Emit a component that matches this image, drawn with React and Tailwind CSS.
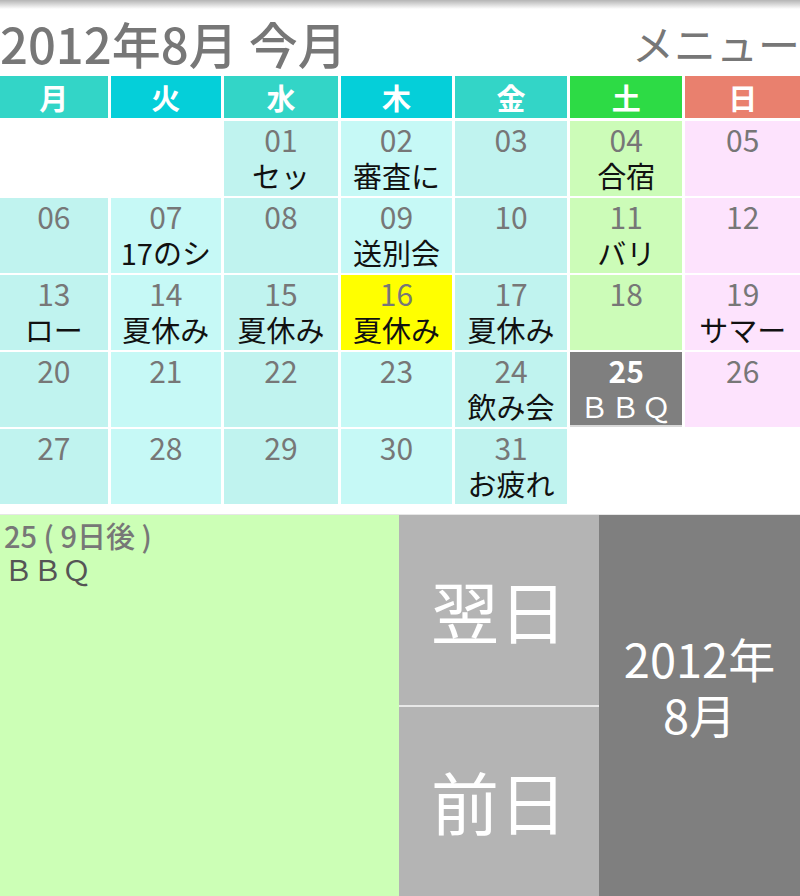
const headers = [
  { label: "月", bg: "bg-[#33d5c7]" },
  { label: "火", bg: "bg-[#05cfd9]" },
  { label: "水", bg: "bg-[#33d5c7]" },
  { label: "木", bg: "bg-[#05cfd9]" },
  { label: "金", bg: "bg-[#33d5c7]" },
  { label: "土", bg: "bg-[#2ddb45]" },
  { label: "日", bg: "bg-[#e9806e]" },
];

const cellBg = [
  "bg-[#c0f3ef]",
  "bg-[#c6f9f6]",
  "bg-[#c0f3ef]",
  "bg-[#c6f9f6]",
  "bg-[#c0f3ef]",
  "bg-[#ccfcb8]",
  "bg-[#fde3fd]",
];

// null = empty slot outside the month
const weeks = [
  [null, null, { d: "01", ev: "セッ" }, { d: "02", ev: "審査に" }, { d: "03" }, { d: "04", ev: "合宿" }, { d: "05" }],
  [{ d: "06" }, { d: "07", ev: "17のシ" }, { d: "08" }, { d: "09", ev: "送別会" }, { d: "10" }, { d: "11", ev: "バリ" }, { d: "12" }],
  [{ d: "13", ev: "ロー" }, { d: "14", ev: "夏休み" }, { d: "15", ev: "夏休み" }, { d: "16", ev: "夏休み", today: true }, { d: "17", ev: "夏休み" }, { d: "18" }, { d: "19", ev: "サマー" }],
  [{ d: "20" }, { d: "21" }, { d: "22" }, { d: "23" }, { d: "24", ev: "飲み会" }, { d: "25", ev: "ＢＢＱ", selected: true }, { d: "26" }],
  [{ d: "27" }, { d: "28" }, { d: "29" }, { d: "30" }, { d: "31", ev: "お疲れ" }, null, null],
];

function DayCell({ cell, col }) {
  if (!cell) return <div className="h-[75px] bg-white" />;

  if (cell.selected) {
    return (
      <div className="h-[75px] bg-[#7f7f7f] border-b-2 border-[#d9d9d9] flex flex-col items-center">
        <span className="text-[30px] leading-[36px] font-bold text-white">{cell.d}</span>
        <span className="text-[29px] leading-[34px] text-white tracking-[2px]">{cell.ev}</span>
      </div>
    );
  }

  const bg = cell.today ? "bg-[#ffff00]" : cellBg[col];
  return (
    <div className={`h-[75px] ${bg} flex flex-col items-center`}>
      <span className="text-[30px] leading-[36px] text-[#777777]">{cell.d}</span>
      {cell.ev && <span className="text-[29px] leading-[36px] text-[#111111] whitespace-nowrap">{cell.ev}</span>}
    </div>
  );
}

export default function App() {
  return (
    <div className="w-[800px] h-[896px] bg-white overflow-hidden font-['Noto_Sans_CJK_JP','Noto_Sans',sans-serif] flex flex-col">
      <div className="h-[9px] bg-gradient-to-b from-[#b5b5b5] to-white" />

      <div className="h-[67px] flex items-center justify-between">
        <span className="text-[49px] leading-none font-medium text-[#777777] whitespace-nowrap">2012年8月 今月</span>
        <span className="text-[42px] leading-none text-[#777777] whitespace-nowrap">メニュー</span>
      </div>

      <div className="grid grid-cols-[108fr_111fr_114fr_112fr_112fr_113fr_115fr] gap-x-[3px] gap-y-[2px]">
        {headers.map((h) => (
          <div key={h.label} className={`h-[42px] mb-[1px] ${h.bg} flex items-center justify-center`}>
            <span className="text-[29px] leading-none font-bold text-white">{h.label}</span>
          </div>
        ))}
        {weeks.map((week, wi) =>
          week.map((cell, ci) => <DayCell key={`${wi}-${ci}`} cell={cell} col={ci} />)
        )}
      </div>

      <div className="mt-[10px] flex-1 flex border-t border-[#e6e6e6]">
        <div className="w-[399px] bg-[#ccffb6] px-[4px] pt-[4px] flex flex-col">
          <span className="text-[29px] leading-[33px] font-medium text-[#777777]">25 ( 9日後 )</span>
          <span className="text-[29px] leading-[33px] text-[#555555]">ＢＢＱ</span>
        </div>
        <div className="w-[200px] flex flex-col">
          <div className="flex-1 bg-[#b4b4b4] flex items-center justify-center">
            <span className="text-[68px] leading-none text-white">翌日</span>
          </div>
          <div className="h-[2px] bg-[#e8e8e8]" />
          <div className="flex-1 bg-[#b4b4b4] flex items-center justify-center">
            <span className="text-[68px] leading-none text-white">前日</span>
          </div>
        </div>
        <div className="flex-1 bg-[#7f7f7f] flex flex-col items-center justify-center pb-[40px]">
          <span className="text-[47px] leading-[56px] text-white">2012年</span>
          <span className="text-[47px] leading-[56px] text-white">8月</span>
        </div>
      </div>
    </div>
  );
}
